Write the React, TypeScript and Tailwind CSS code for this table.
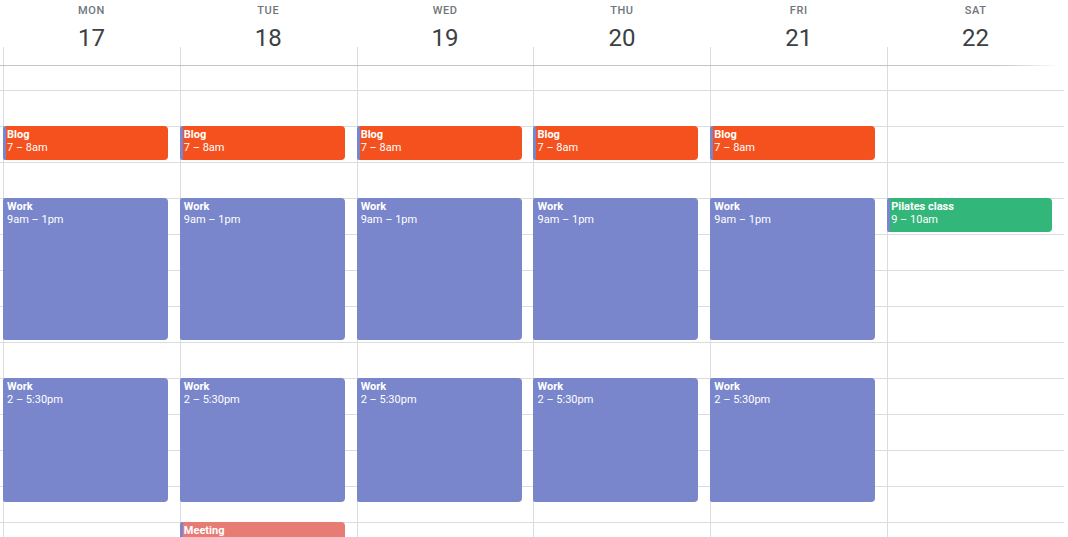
import React from 'react';

type CalEvent = {
  title: string;
  time: string;
  start: number; // hour of day
  end: number;
  color: string;
};

const days: { name: string; date: number; events: CalEvent[] }[] = [
  { name: 'MON', date: 17, events: [] },
  { name: 'TUE', date: 18, events: [] },
  { name: 'WED', date: 19, events: [] },
  { name: 'THU', date: 20, events: [] },
  { name: 'FRI', date: 21, events: [] },
  { name: 'SAT', date: 22, events: [] },
];

// weekday routine
for (let i = 0; i < 5; i++) {
  days[i].events.push(
    { title: 'Blog', time: '7 – 8am', start: 7, end: 8, color: 'bg-[#f4511e]' },
    { title: 'Work', time: '9am – 1pm', start: 9, end: 13, color: 'bg-[#7986cb]' },
    { title: 'Work', time: '2 – 5:30pm', start: 14, end: 17.5, color: 'bg-[#7986cb]' },
  );
}
days[1].events.push({ title: 'Meeting', time: '6 – 7pm', start: 18, end: 19, color: 'bg-[#e67c73]' });
days[5].events.push({ title: 'Pilates class', time: '9 – 10am', start: 9, end: 10, color: 'bg-[#33b679]' });

const HOUR = 36;
const FIRST_LINE = 24; // offset of the 6am line below the header
const rows = Array.from({ length: 13 });

const EventChip: React.FC<{ ev: CalEvent }> = ({ ev }) => (
  <div
    className={`absolute left-[-1px] w-[165px] ${ev.color} border-l-[3px] border-[#7986cb] rounded-r-[4px] rounded-l-[2px] pl-px pt-[2px] overflow-hidden text-white text-[11px] leading-[13px]`}
    style={{
      top: FIRST_LINE + (ev.start - 6) * HOUR,
      height: (ev.end - ev.start) * HOUR - 2,
    }}
  >
    <div className="font-bold">{ev.title}</div>
    <div>{ev.time}</div>
  </div>
);

export default function App() {
  return (
    <div className="w-[1068px] h-[537px] overflow-hidden bg-white font-['Roboto','Liberation_Sans',sans-serif]">
      {/* Header */}
      <div className="grid grid-cols-6 w-[1064px] pl-[3px]">
        {days.map((d) => (
          <div key={d.name} className="flex flex-col">
            <div className="h-[47px] flex flex-col items-center pt-[5px]">
              <div className="text-[11px] leading-[12px] font-medium tracking-[0.6px] text-[#70757a]">{d.name}</div>
              <div className="mt-[12px] text-[24px] leading-[18px] text-[#3c4043]">{d.date}</div>
            </div>
            <div className="h-[18px] border-l border-[#dadce0]" />
          </div>
        ))}
      </div>
      <div className="h-px w-[1060px] bg-linear-to-r from-[#c4c4c4] from-[94%] to-white" />

      {/* Body */}
      <div className="relative w-[1064px]">
        <div className="h-[25px] border-b border-[#dadce0]" />
        {rows.map((_, i) => (
          <div key={i} className="h-[36px] border-b border-[#dadce0]" />
        ))}

        <div className="absolute inset-0 pl-[3px] grid grid-cols-6">
          {days.map((d) => (
            <div key={d.name} className="relative border-l border-[#dadce0]">
              {d.events.map((ev, j) => (
                <EventChip key={j} ev={ev} />
              ))}
            </div>
          ))}
        </div>
      </div>
    </div>
  );
}
